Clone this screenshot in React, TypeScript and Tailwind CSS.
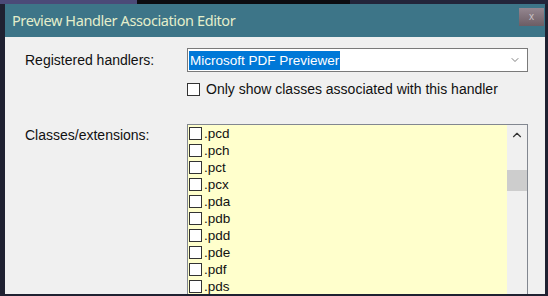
import { ChevronDown, ChevronUp } from 'lucide-react';

const extensions = ['.pcd', '.pch', '.pct', '.pcx', '.pda', '.pdb', '.pdd', '.pde', '.pdf', '.pds'];

function Box({ className = '' }: { className?: string }) {
    return <span className={`block w-[13px] h-[13px] border border-[#333333] bg-white shrink-0 ${className}`} />;
}

export default function App() {
    return (
        <div className="w-[548px] h-[296px] overflow-hidden bg-[#1f2131] flex flex-col font-['Liberation_Sans',Arial,sans-serif]">
            {/* desktop strip behind the dialog */}
            <div className="h-[4px] flex shrink-0">
                <div className="w-[137px] bg-[#4b4a78]" />
                <div className="w-[213px] bg-[#0c0c10]" />
                <div className="flex-1 bg-[#23253a]" />
            </div>

            <div className="flex-1 ml-[5px] mr-[3px] mb-[2px] flex flex-col bg-[#f0f0f0] min-h-0">
                {/* title bar */}
                <div className="h-[33px] shrink-0 bg-[#3d7588] flex items-start">
                    <span className="mt-[6px] ml-[7px] text-[14.5px] leading-[20px] text-[#e4eecb] font-['Noto_Sans',sans-serif] tracking-[-0.4px]">
                        Preview Handler Association Editor
                    </span>
                    <div className="ml-auto mt-[4px] mr-[1px] w-[25px] h-[18px] bg-gradient-to-b from-[#948690] to-[#6c5d64] flex items-center justify-center">
                        <span className="text-[10px] leading-none text-[#c9c2c6]">x</span>
                    </div>
                </div>

                {/* body */}
                <div className="flex-1 flex flex-col min-h-0 pl-[20px] pr-[17px] pt-[11px]">
                    <div className="flex items-center">
                        <span className="w-[162px] text-[14px] text-[#111]">Registered handlers:</span>
                        <div className="flex-1 h-[24px] border border-[#7a7a7a] bg-white flex items-center pl-[1px] pr-[6px]">
                            <span className="bg-[#0078d7] text-white text-[13.5px] leading-[19px] px-[1px]">Microsoft PDF Previewer</span>
                            <ChevronDown className="ml-auto w-[12px] h-[12px] text-[#555]" strokeWidth={1.5} />
                        </div>
                    </div>

                    <div className="flex items-center mt-[7px] ml-[162px]">
                        <Box />
                        <span className="ml-[6px] text-[14px] text-[#111]">Only show classes associated with this handler</span>
                    </div>

                    <div className="flex flex-1 min-h-0 mt-[24px]">
                        <span className="w-[162px] pt-[1px] text-[14px] text-[#111]">Classes/extensions:</span>
                        <div className="flex-1 border border-[#828790] border-b-0 bg-[#ffffcc] flex overflow-hidden">
                            <div className="flex-1 flex flex-col pl-[1px]">
                                {extensions.map(ext => (
                                    <div key={ext} className="h-[17px] shrink-0 flex items-center">
                                        <Box className="w-[12px] h-[12px]" />
                                        <span className="ml-[2px] text-[13.5px] leading-none text-[#111]">{ext}</span>
                                    </div>
                                ))}
                            </div>
                            <div className="w-[20px] bg-[#f0f0f0] flex flex-col items-center">
                                <ChevronUp className="mt-[3px] w-[14px] h-[14px] text-[#333]" strokeWidth={2} />
                                <div className="mt-[28px] w-[20px] h-[21px] bg-[#cdcdcd]" />
                            </div>
                        </div>
                    </div>
                </div>
            </div>
        </div>
    );
}
